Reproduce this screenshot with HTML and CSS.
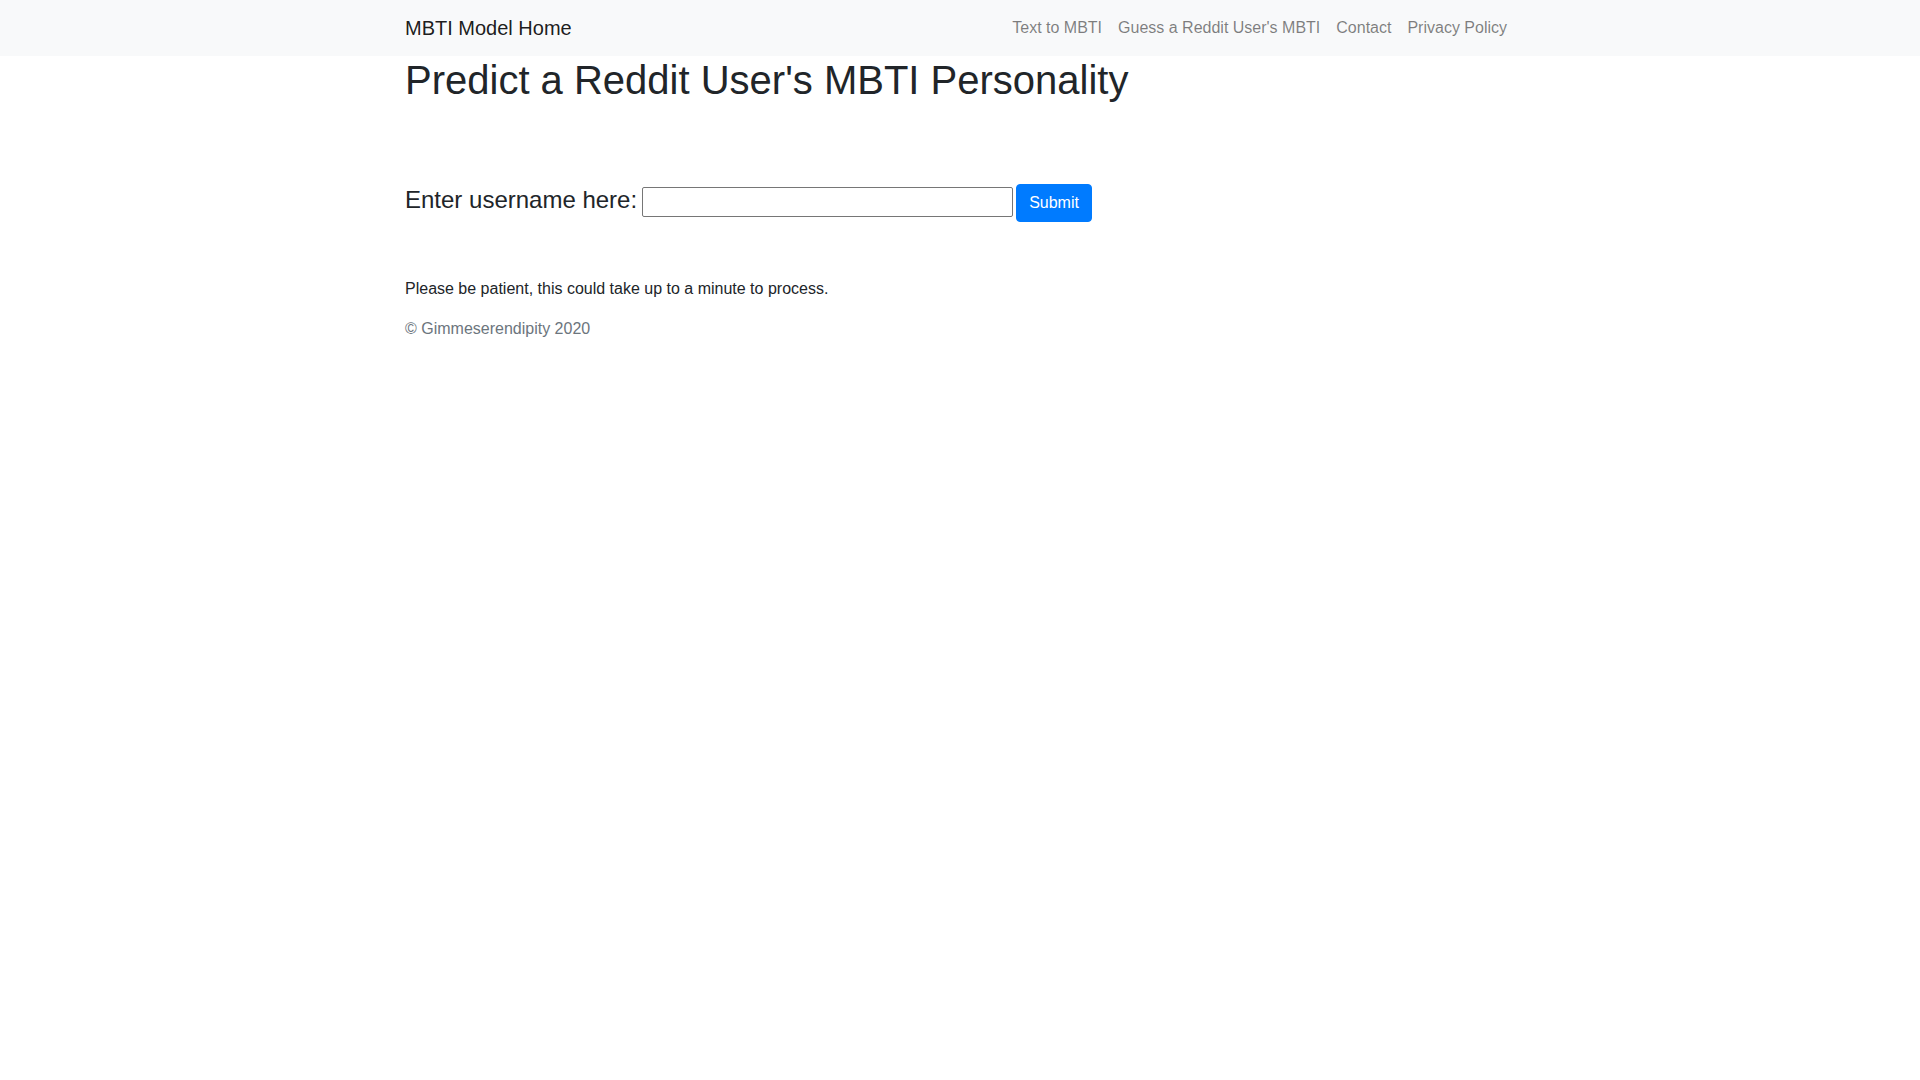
FILE: index.html
```html
<!DOCTYPE html>
<html lang="en">
<head>
<meta charset="utf-8">
<title>MBTI Model</title>
<link rel="stylesheet" href="styles.css">
</head>
<body>
<nav class="navbar">
  <div class="container nav-inner">
    <a class="brand" href="#">MBTI Model Home</a>
    <ul class="nav-links">
      <li><a class="nav-link" href="#">Text to MBTI</a></li>
      <li><a class="nav-link" href="#">Guess a Reddit User's MBTI</a></li>
      <li><a class="nav-link" href="#">Contact</a></li>
      <li><a class="nav-link" href="#">Privacy Policy</a></li>
    </ul>
  </div>
</nav>
<main class="container">
  <h1 class="title">Predict a Reddit User's MBTI Personality</h1>
  <form class="lookup">
    <label class="lookup-label" for="username">Enter username here:</label>
    <input class="lookup-input" id="username" type="text">
    <button class="btn-primary" type="button">Submit</button>
  </form>
  <p class="note">Please be patient, this could take up to a minute to process.</p>
  <p class="copy">© Gimmeserendipity 2020</p>
</main>
</body>
</html>
```
FILE: styles.css
```css
* { box-sizing: border-box; }
html, body { margin: 0; padding: 0; }
body {
  font-family: "Liberation Sans", Arial, sans-serif;
  font-size: 16px;
  line-height: 1.5;
  color: #212529;
  background: #fff;
}
.container {
  width: 1140px;
  margin: 0 auto;
  padding: 0 15px;
}
.navbar {
  background: #f8f9fa;
  padding: 8px 0;
}
.nav-inner {
  display: flex;
  align-items: center;
  justify-content: space-between;
}
.brand {
  font-size: 20px;
  line-height: 30px;
  padding: 5px 0;
  color: rgba(0,0,0,.9);
  text-decoration: none;
}
.nav-links {
  display: flex;
  list-style: none;
  margin: 0;
  padding: 0;
}
.nav-link {
  display: block;
  padding: 8px;
  color: rgba(0,0,0,.5);
  text-decoration: none;
}
.title {
  font-size: 40px;
  font-weight: 500;
  line-height: 1.2;
  margin: 0 0 8px;
}
.lookup {
  display: flex;
  align-items: baseline;
  margin: 80px 0 0;
}
.lookup-label {
  font-size: 24px;
  line-height: 1.2;
  font-weight: 500;
  margin-right: 5px;
}
.lookup-input {
  width: 371px;
  height: 30px;
  font-size: 24px;
  font-family: inherit;
  border: 1px solid #767676;
  border-radius: 2px;
  padding: 0 2px 4px;
  margin: 0 3px 0 0;
  background: #fff;
}
.btn-primary {
  font-family: inherit;
  font-size: 16px;
  line-height: 1.5;
  padding: 6px 12px;
  color: #fff;
  background: #007bff;
  border: 1px solid #007bff;
  border-radius: 4px;
  cursor: pointer;
}
.note {
  margin: 55px 0 16px;
}
.copy {
  margin: 0;
  color: #6c757d;
}
```
